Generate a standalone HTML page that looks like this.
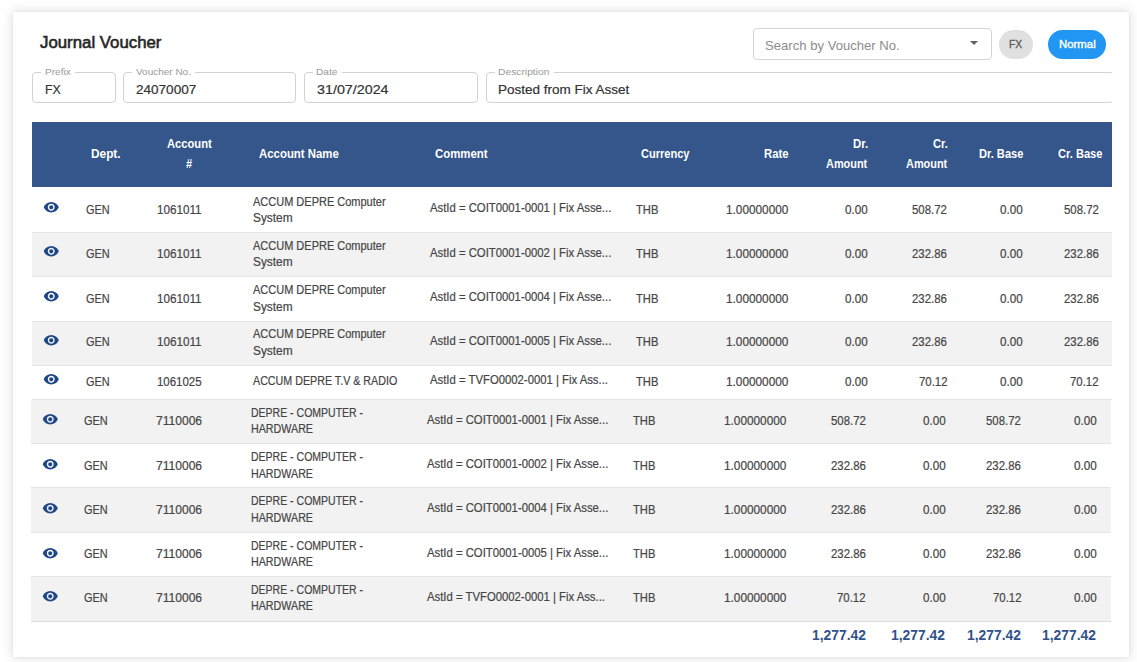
<!DOCTYPE html>
<html><head><meta charset="utf-8"><style>
html,body{margin:0;padding:0;background:#fff;width:1137px;height:662px;overflow:hidden;}
body{position:relative;font-family:"Liberation Sans",sans-serif;}
.b{position:absolute;}
.t{position:absolute;white-space:nowrap;transform-origin:0 0;}
svg{display:block;}
</style></head><body>
<div class="b" style="left:13.00px;top:12.00px;width:1116.00px;height:645.00px;background:#fff;box-shadow:0 0 11px 1px rgba(0,0,0,0.12),0 0 3px rgba(0,0,0,0.07);"></div>
<span class="t" style="left:39.75px;top:32.01px;font-size:17px;line-height:21px;color:#262626;transform:scaleX(0.9886);-webkit-text-stroke:0.6px #262626;">Journal Voucher</span>
<div class="b" style="left:753.00px;top:28.00px;width:239.00px;height:31.50px;border:1px solid #d6d6d6;border-radius:4px;box-sizing:border-box;"></div>
<span class="t" style="left:764.71px;top:37.69px;font-size:13px;line-height:16px;color:#8c8c8c;transform:scaleX(1.0080);">Search by Voucher No.</span>
<div class="b" style="left:969.5px;top:41px;width:0;height:0;border-left:4px solid transparent;border-right:4px solid transparent;border-top:4.5px solid #616161;"></div>
<div class="b" style="left:999.00px;top:30.00px;width:34.00px;height:28.50px;background:#e0e0e0;border-radius:15px;"></div>
<span class="t" style="left:1008.98px;top:38.83px;font-size:10px;line-height:12px;color:#5a5a5a;transform:scaleX(1.0298);-webkit-text-stroke:0.3px #5a5a5a;">FX</span>
<div class="b" style="left:1048.00px;top:30.00px;width:58.00px;height:28.50px;background:#2196f3;border-radius:15px;"></div>
<span class="t" style="left:1058.59px;top:38.83px;font-size:10px;line-height:12px;color:#fff;transform:scaleX(1.1382);-webkit-text-stroke:0.35px #fff;">Normal</span>
<div class="b" style="left:0;top:0;width:1112px;height:662px;overflow:hidden;">
<div class="b" style="left:32.00px;top:72.00px;width:84.00px;height:31.00px;border:1px solid #d2d2d2;border-radius:4px;box-sizing:border-box;"></div>
<div class="b" style="left:40.80px;top:71.00px;width:33.80px;height:3.00px;background:#fff;"></div>
<span class="t" style="left:44.50px;top:66.42px;font-size:9.75px;line-height:12px;color:#9a9a9a;transform:scaleX(1.0319);">Prefix</span>
<span class="t" style="left:45.01px;top:82.49px;font-size:13px;line-height:16px;color:#333;transform:scaleX(0.9493);-webkit-text-stroke:0.2px #333;">FX</span>
<div class="b" style="left:123.00px;top:72.00px;width:173.00px;height:31.00px;border:1px solid #d2d2d2;border-radius:4px;box-sizing:border-box;"></div>
<div class="b" style="left:131.80px;top:71.00px;width:63.00px;height:3.00px;background:#fff;"></div>
<span class="t" style="left:136.25px;top:66.42px;font-size:9.75px;line-height:12px;color:#9a9a9a;transform:scaleX(1.0237);">Voucher No.</span>
<span class="t" style="left:135.62px;top:82.49px;font-size:13px;line-height:16px;color:#333;transform:scaleX(1.0416);-webkit-text-stroke:0.2px #333;">24070007</span>
<div class="b" style="left:304.30px;top:72.00px;width:173.70px;height:31.00px;border:1px solid #d2d2d2;border-radius:4px;box-sizing:border-box;"></div>
<div class="b" style="left:312.50px;top:71.00px;width:29.10px;height:3.00px;background:#fff;"></div>
<span class="t" style="left:316.19px;top:66.42px;font-size:9.75px;line-height:12px;color:#9a9a9a;transform:scaleX(1.0359);">Date</span>
<span class="t" style="left:316.50px;top:82.49px;font-size:13px;line-height:16px;color:#333;transform:scaleX(1.0998);-webkit-text-stroke:0.2px #333;">31/07/2024</span>
<div class="b" style="left:486.30px;top:72.00px;width:627.70px;height:31.00px;border:1px solid #d2d2d2;border-radius:4px;box-sizing:border-box;"></div>
<div class="b" style="left:494.50px;top:71.00px;width:59.00px;height:3.00px;background:#fff;"></div>
<span class="t" style="left:498.18px;top:66.42px;font-size:9.75px;line-height:12px;color:#9a9a9a;transform:scaleX(1.0552);">Description</span>
<span class="t" style="left:497.92px;top:82.49px;font-size:13px;line-height:16px;color:#333;transform:scaleX(1.0373);-webkit-text-stroke:0.2px #333;">Posted from Fix Asset</span>
</div>
<div class="b" style="left:32.00px;top:122.00px;width:1080.00px;height:65.00px;background:#34568b;"></div>
<span class="t" style="left:91.23px;top:147.44px;font-size:12px;line-height:15px;color:#fff;font-weight:bold;transform:scaleX(0.9866);">Dept.</span>
<span class="t" style="left:167.32px;top:137.14px;font-size:12px;line-height:15px;color:#fff;font-weight:bold;transform:scaleX(0.9322);">Account</span>
<span class="t" style="left:186.33px;top:157.44px;font-size:12px;line-height:15px;color:#fff;font-weight:bold;transform:scaleX(0.9200);">#</span>
<span class="t" style="left:259.11px;top:147.24px;font-size:12px;line-height:15px;color:#fff;font-weight:bold;transform:scaleX(0.9503);">Account Name</span>
<span class="t" style="left:434.84px;top:147.24px;font-size:12px;line-height:15px;color:#fff;font-weight:bold;transform:scaleX(0.9503);">Comment</span>
<span class="t" style="left:640.66px;top:147.24px;font-size:12px;line-height:15px;color:#fff;font-weight:bold;transform:scaleX(0.9206);">Currency</span>
<span class="t" style="left:763.87px;top:147.24px;font-size:12px;line-height:15px;color:#fff;font-weight:bold;transform:scaleX(0.9420);">Rate</span>
<span class="t" style="left:853.16px;top:137.24px;font-size:12px;line-height:15px;color:#fff;font-weight:bold;transform:scaleX(0.9444);">Dr.</span>
<span class="t" style="left:826.43px;top:156.94px;font-size:12px;line-height:15px;color:#fff;font-weight:bold;transform:scaleX(0.9091);">Amount</span>
<span class="t" style="left:932.86px;top:137.24px;font-size:12px;line-height:15px;color:#fff;font-weight:bold;transform:scaleX(0.9252);">Cr.</span>
<span class="t" style="left:905.83px;top:156.94px;font-size:12px;line-height:15px;color:#fff;font-weight:bold;transform:scaleX(0.9091);">Amount</span>
<span class="t" style="left:978.68px;top:147.24px;font-size:12px;line-height:15px;color:#fff;font-weight:bold;transform:scaleX(0.9240);">Dr. Base</span>
<span class="t" style="left:1058.06px;top:147.24px;font-size:12px;line-height:15px;color:#fff;font-weight:bold;transform:scaleX(0.9245);">Cr. Base</span>
<div class="b" style="left:32.00px;top:187.00px;width:1080.00px;height:46.00px;background:#fff;border-bottom:1px solid #e4e4e4;box-sizing:border-box;"></div>
<div class="b" style="left:43.05px;top:199.05px;width:16px;height:16px;"><svg viewBox="0 0 24 24" width="16.5" height="16.5"><path fill="#1f4787" d="M12 4.5C7 4.5 2.73 7.61 1 12c1.73 4.39 6 7.5 11 7.5s9.27-3.11 11-7.5c-1.73-4.39-6-7.5-11-7.5zM12 17c-2.76 0-5-2.24-5-5s2.24-5 5-5 5 2.24 5 5-2.24 5-5 5zm0-8c-1.66 0-3 1.34-3 3s1.34 3 3 3 3-1.34 3-3-1.34-3-3-3z"/></svg></div>
<span class="t" style="left:85.75px;top:202.74px;font-size:12px;line-height:15px;color:#454545;-webkit-text-stroke:0.2px #454545;transform:scaleX(0.9132);">GEN</span>
<span class="t" style="left:157.22px;top:202.74px;font-size:12px;line-height:15px;color:#454545;-webkit-text-stroke:0.2px #454545;transform:scaleX(0.9730);">1061011</span>
<span class="t" style="left:253.20px;top:194.64px;font-size:12px;line-height:15px;color:#454545;-webkit-text-stroke:0.2px #454545;transform:scaleX(0.9160);">ACCUM DEPRE Computer</span>
<span class="t" style="left:252.67px;top:210.84px;font-size:12px;line-height:15px;color:#454545;-webkit-text-stroke:0.2px #454545;transform:scaleX(0.9897);">System</span>
<span class="t" style="left:430.00px;top:201.44px;font-size:12px;line-height:15px;color:#454545;-webkit-text-stroke:0.2px #454545;transform:scaleX(0.9432);">AstId = COIT0001-0001 | Fix Asse...</span>
<span class="t" style="left:635.58px;top:202.74px;font-size:12px;line-height:15px;color:#454545;-webkit-text-stroke:0.2px #454545;transform:scaleX(0.9326);">THB</span>
<span class="t" style="left:726.32px;top:202.74px;font-size:12px;line-height:15px;color:#454545;-webkit-text-stroke:0.2px #454545;transform:scaleX(0.9832);">1.00000000</span>
<span class="t" style="left:845.12px;top:202.74px;font-size:12px;line-height:15px;color:#454545;-webkit-text-stroke:0.2px #454545;transform:scaleX(0.9720);">0.00</span>
<span class="t" style="left:912.22px;top:202.74px;font-size:12px;line-height:15px;color:#454545;-webkit-text-stroke:0.2px #454545;transform:scaleX(0.9490);">508.72</span>
<span class="t" style="left:999.92px;top:202.74px;font-size:12px;line-height:15px;color:#454545;-webkit-text-stroke:0.2px #454545;transform:scaleX(0.9720);">0.00</span>
<span class="t" style="left:1063.72px;top:202.74px;font-size:12px;line-height:15px;color:#454545;-webkit-text-stroke:0.2px #454545;transform:scaleX(0.9490);">508.72</span>
<div class="b" style="left:32.00px;top:233.00px;width:1080.00px;height:44.00px;background:#f2f2f2;border-bottom:1px solid #e4e4e4;box-sizing:border-box;"></div>
<div class="b" style="left:43.05px;top:243.15px;width:16px;height:16px;"><svg viewBox="0 0 24 24" width="16.5" height="16.5"><path fill="#1f4787" d="M12 4.5C7 4.5 2.73 7.61 1 12c1.73 4.39 6 7.5 11 7.5s9.27-3.11 11-7.5c-1.73-4.39-6-7.5-11-7.5zM12 17c-2.76 0-5-2.24-5-5s2.24-5 5-5 5 2.24 5 5-2.24 5-5 5zm0-8c-1.66 0-3 1.34-3 3s1.34 3 3 3 3-1.34 3-3-1.34-3-3-3z"/></svg></div>
<span class="t" style="left:85.75px;top:246.84px;font-size:12px;line-height:15px;color:#454545;-webkit-text-stroke:0.2px #454545;transform:scaleX(0.9132);">GEN</span>
<span class="t" style="left:157.22px;top:246.84px;font-size:12px;line-height:15px;color:#454545;-webkit-text-stroke:0.2px #454545;transform:scaleX(0.9730);">1061011</span>
<span class="t" style="left:253.20px;top:238.74px;font-size:12px;line-height:15px;color:#454545;-webkit-text-stroke:0.2px #454545;transform:scaleX(0.9160);">ACCUM DEPRE Computer</span>
<span class="t" style="left:252.67px;top:254.94px;font-size:12px;line-height:15px;color:#454545;-webkit-text-stroke:0.2px #454545;transform:scaleX(0.9897);">System</span>
<span class="t" style="left:430.00px;top:245.54px;font-size:12px;line-height:15px;color:#454545;-webkit-text-stroke:0.2px #454545;transform:scaleX(0.9432);">AstId = COIT0001-0002 | Fix Asse...</span>
<span class="t" style="left:635.58px;top:246.84px;font-size:12px;line-height:15px;color:#454545;-webkit-text-stroke:0.2px #454545;transform:scaleX(0.9326);">THB</span>
<span class="t" style="left:726.32px;top:246.84px;font-size:12px;line-height:15px;color:#454545;-webkit-text-stroke:0.2px #454545;transform:scaleX(0.9832);">1.00000000</span>
<span class="t" style="left:845.12px;top:246.84px;font-size:12px;line-height:15px;color:#454545;-webkit-text-stroke:0.2px #454545;transform:scaleX(0.9720);">0.00</span>
<span class="t" style="left:912.11px;top:246.84px;font-size:12px;line-height:15px;color:#454545;-webkit-text-stroke:0.2px #454545;transform:scaleX(0.9490);">232.86</span>
<span class="t" style="left:999.92px;top:246.84px;font-size:12px;line-height:15px;color:#454545;-webkit-text-stroke:0.2px #454545;transform:scaleX(0.9720);">0.00</span>
<span class="t" style="left:1063.61px;top:246.84px;font-size:12px;line-height:15px;color:#454545;-webkit-text-stroke:0.2px #454545;transform:scaleX(0.9490);">232.86</span>
<div class="b" style="left:32.00px;top:277.00px;width:1080.00px;height:45.00px;background:#fff;border-bottom:1px solid #e4e4e4;box-sizing:border-box;"></div>
<div class="b" style="left:43.05px;top:287.85px;width:16px;height:16px;"><svg viewBox="0 0 24 24" width="16.5" height="16.5"><path fill="#1f4787" d="M12 4.5C7 4.5 2.73 7.61 1 12c1.73 4.39 6 7.5 11 7.5s9.27-3.11 11-7.5c-1.73-4.39-6-7.5-11-7.5zM12 17c-2.76 0-5-2.24-5-5s2.24-5 5-5 5 2.24 5 5-2.24 5-5 5zm0-8c-1.66 0-3 1.34-3 3s1.34 3 3 3 3-1.34 3-3-1.34-3-3-3z"/></svg></div>
<span class="t" style="left:85.75px;top:291.54px;font-size:12px;line-height:15px;color:#454545;-webkit-text-stroke:0.2px #454545;transform:scaleX(0.9132);">GEN</span>
<span class="t" style="left:157.22px;top:291.54px;font-size:12px;line-height:15px;color:#454545;-webkit-text-stroke:0.2px #454545;transform:scaleX(0.9730);">1061011</span>
<span class="t" style="left:253.20px;top:283.44px;font-size:12px;line-height:15px;color:#454545;-webkit-text-stroke:0.2px #454545;transform:scaleX(0.9160);">ACCUM DEPRE Computer</span>
<span class="t" style="left:252.67px;top:299.64px;font-size:12px;line-height:15px;color:#454545;-webkit-text-stroke:0.2px #454545;transform:scaleX(0.9897);">System</span>
<span class="t" style="left:430.00px;top:290.24px;font-size:12px;line-height:15px;color:#454545;-webkit-text-stroke:0.2px #454545;transform:scaleX(0.9432);">AstId = COIT0001-0004 | Fix Asse...</span>
<span class="t" style="left:635.58px;top:291.54px;font-size:12px;line-height:15px;color:#454545;-webkit-text-stroke:0.2px #454545;transform:scaleX(0.9326);">THB</span>
<span class="t" style="left:726.32px;top:291.54px;font-size:12px;line-height:15px;color:#454545;-webkit-text-stroke:0.2px #454545;transform:scaleX(0.9832);">1.00000000</span>
<span class="t" style="left:845.12px;top:291.54px;font-size:12px;line-height:15px;color:#454545;-webkit-text-stroke:0.2px #454545;transform:scaleX(0.9720);">0.00</span>
<span class="t" style="left:912.11px;top:291.54px;font-size:12px;line-height:15px;color:#454545;-webkit-text-stroke:0.2px #454545;transform:scaleX(0.9490);">232.86</span>
<span class="t" style="left:999.92px;top:291.54px;font-size:12px;line-height:15px;color:#454545;-webkit-text-stroke:0.2px #454545;transform:scaleX(0.9720);">0.00</span>
<span class="t" style="left:1063.61px;top:291.54px;font-size:12px;line-height:15px;color:#454545;-webkit-text-stroke:0.2px #454545;transform:scaleX(0.9490);">232.86</span>
<div class="b" style="left:32.00px;top:322.00px;width:1080.00px;height:44.00px;background:#f2f2f2;border-bottom:1px solid #e4e4e4;box-sizing:border-box;"></div>
<div class="b" style="left:43.05px;top:331.75px;width:16px;height:16px;"><svg viewBox="0 0 24 24" width="16.5" height="16.5"><path fill="#1f4787" d="M12 4.5C7 4.5 2.73 7.61 1 12c1.73 4.39 6 7.5 11 7.5s9.27-3.11 11-7.5c-1.73-4.39-6-7.5-11-7.5zM12 17c-2.76 0-5-2.24-5-5s2.24-5 5-5 5 2.24 5 5-2.24 5-5 5zm0-8c-1.66 0-3 1.34-3 3s1.34 3 3 3 3-1.34 3-3-1.34-3-3-3z"/></svg></div>
<span class="t" style="left:85.75px;top:335.44px;font-size:12px;line-height:15px;color:#454545;-webkit-text-stroke:0.2px #454545;transform:scaleX(0.9132);">GEN</span>
<span class="t" style="left:157.22px;top:335.44px;font-size:12px;line-height:15px;color:#454545;-webkit-text-stroke:0.2px #454545;transform:scaleX(0.9730);">1061011</span>
<span class="t" style="left:253.20px;top:327.34px;font-size:12px;line-height:15px;color:#454545;-webkit-text-stroke:0.2px #454545;transform:scaleX(0.9160);">ACCUM DEPRE Computer</span>
<span class="t" style="left:252.67px;top:343.54px;font-size:12px;line-height:15px;color:#454545;-webkit-text-stroke:0.2px #454545;transform:scaleX(0.9897);">System</span>
<span class="t" style="left:430.00px;top:334.14px;font-size:12px;line-height:15px;color:#454545;-webkit-text-stroke:0.2px #454545;transform:scaleX(0.9432);">AstId = COIT0001-0005 | Fix Asse...</span>
<span class="t" style="left:635.58px;top:335.44px;font-size:12px;line-height:15px;color:#454545;-webkit-text-stroke:0.2px #454545;transform:scaleX(0.9326);">THB</span>
<span class="t" style="left:726.32px;top:335.44px;font-size:12px;line-height:15px;color:#454545;-webkit-text-stroke:0.2px #454545;transform:scaleX(0.9832);">1.00000000</span>
<span class="t" style="left:845.12px;top:335.44px;font-size:12px;line-height:15px;color:#454545;-webkit-text-stroke:0.2px #454545;transform:scaleX(0.9720);">0.00</span>
<span class="t" style="left:912.11px;top:335.44px;font-size:12px;line-height:15px;color:#454545;-webkit-text-stroke:0.2px #454545;transform:scaleX(0.9490);">232.86</span>
<span class="t" style="left:999.92px;top:335.44px;font-size:12px;line-height:15px;color:#454545;-webkit-text-stroke:0.2px #454545;transform:scaleX(0.9720);">0.00</span>
<span class="t" style="left:1063.61px;top:335.44px;font-size:12px;line-height:15px;color:#454545;-webkit-text-stroke:0.2px #454545;transform:scaleX(0.9490);">232.86</span>
<div class="b" style="left:32.00px;top:366.00px;width:1080.00px;height:34.00px;background:#fff;border-bottom:1px solid #e4e4e4;box-sizing:border-box;"></div>
<div class="b" style="left:43.05px;top:370.95px;width:16px;height:16px;"><svg viewBox="0 0 24 24" width="16.5" height="16.5"><path fill="#1f4787" d="M12 4.5C7 4.5 2.73 7.61 1 12c1.73 4.39 6 7.5 11 7.5s9.27-3.11 11-7.5c-1.73-4.39-6-7.5-11-7.5zM12 17c-2.76 0-5-2.24-5-5s2.24-5 5-5 5 2.24 5 5-2.24 5-5 5zm0-8c-1.66 0-3 1.34-3 3s1.34 3 3 3 3-1.34 3-3-1.34-3-3-3z"/></svg></div>
<span class="t" style="left:85.75px;top:374.64px;font-size:12px;line-height:15px;color:#454545;-webkit-text-stroke:0.2px #454545;transform:scaleX(0.9132);">GEN</span>
<span class="t" style="left:157.24px;top:374.64px;font-size:12px;line-height:15px;color:#454545;-webkit-text-stroke:0.2px #454545;transform:scaleX(0.9536);">1061025</span>
<span class="t" style="left:253.20px;top:374.34px;font-size:12px;line-height:15px;color:#454545;-webkit-text-stroke:0.2px #454545;transform:scaleX(0.8913);">ACCUM DEPRE T.V &amp; RADIO</span>
<span class="t" style="left:430.00px;top:373.34px;font-size:12px;line-height:15px;color:#454545;-webkit-text-stroke:0.2px #454545;transform:scaleX(0.9434);">AstId = TVFO0002-0001 | Fix Ass...</span>
<span class="t" style="left:635.58px;top:374.64px;font-size:12px;line-height:15px;color:#454545;-webkit-text-stroke:0.2px #454545;transform:scaleX(0.9326);">THB</span>
<span class="t" style="left:726.32px;top:374.64px;font-size:12px;line-height:15px;color:#454545;-webkit-text-stroke:0.2px #454545;transform:scaleX(0.9832);">1.00000000</span>
<span class="t" style="left:845.12px;top:374.64px;font-size:12px;line-height:15px;color:#454545;-webkit-text-stroke:0.2px #454545;transform:scaleX(0.9720);">0.00</span>
<span class="t" style="left:918.60px;top:374.64px;font-size:12px;line-height:15px;color:#454545;-webkit-text-stroke:0.2px #454545;transform:scaleX(0.9490);">70.12</span>
<span class="t" style="left:999.92px;top:374.64px;font-size:12px;line-height:15px;color:#454545;-webkit-text-stroke:0.2px #454545;transform:scaleX(0.9720);">0.00</span>
<span class="t" style="left:1070.10px;top:374.64px;font-size:12px;line-height:15px;color:#454545;-webkit-text-stroke:0.2px #454545;transform:scaleX(0.9490);">70.12</span>
<div class="b" style="left:31.00px;top:400.00px;width:1080.00px;height:44.00px;background:#f2f2f2;border-bottom:1px solid #e4e4e4;box-sizing:border-box;"></div>
<div class="b" style="left:41.85px;top:411.15px;width:16px;height:16px;"><svg viewBox="0 0 24 24" width="16.5" height="16.5"><path fill="#1f4787" d="M12 4.5C7 4.5 2.73 7.61 1 12c1.73 4.39 6 7.5 11 7.5s9.27-3.11 11-7.5c-1.73-4.39-6-7.5-11-7.5zM12 17c-2.76 0-5-2.24-5-5s2.24-5 5-5 5 2.24 5 5-2.24 5-5 5zm0-8c-1.66 0-3 1.34-3 3s1.34 3 3 3 3-1.34 3-3-1.34-3-3-3z"/></svg></div>
<span class="t" style="left:84.25px;top:414.14px;font-size:12px;line-height:15px;color:#454545;-webkit-text-stroke:0.2px #454545;transform:scaleX(0.9132);">GEN</span>
<span class="t" style="left:155.60px;top:414.14px;font-size:12px;line-height:15px;color:#454545;-webkit-text-stroke:0.2px #454545;transform:scaleX(1.0054);">7110006</span>
<span class="t" style="left:251.46px;top:405.54px;font-size:12px;line-height:15px;color:#454545;-webkit-text-stroke:0.2px #454545;transform:scaleX(0.8756);">DEPRE - COMPUTER -</span>
<span class="t" style="left:251.44px;top:422.04px;font-size:12px;line-height:15px;color:#454545;-webkit-text-stroke:0.2px #454545;transform:scaleX(0.8913);">HARDWARE</span>
<span class="t" style="left:427.40px;top:412.54px;font-size:12px;line-height:15px;color:#454545;-webkit-text-stroke:0.2px #454545;transform:scaleX(0.9432);">AstId = COIT0001-0001 | Fix Asse...</span>
<span class="t" style="left:633.38px;top:414.14px;font-size:12px;line-height:15px;color:#454545;-webkit-text-stroke:0.2px #454545;transform:scaleX(0.9326);">THB</span>
<span class="t" style="left:724.12px;top:414.14px;font-size:12px;line-height:15px;color:#454545;-webkit-text-stroke:0.2px #454545;transform:scaleX(0.9832);">1.00000000</span>
<span class="t" style="left:830.92px;top:414.14px;font-size:12px;line-height:15px;color:#454545;-webkit-text-stroke:0.2px #454545;transform:scaleX(0.9490);">508.72</span>
<span class="t" style="left:922.52px;top:414.14px;font-size:12px;line-height:15px;color:#454545;-webkit-text-stroke:0.2px #454545;transform:scaleX(0.9720);">0.00</span>
<span class="t" style="left:986.32px;top:414.14px;font-size:12px;line-height:15px;color:#454545;-webkit-text-stroke:0.2px #454545;transform:scaleX(0.9490);">508.72</span>
<span class="t" style="left:1073.52px;top:414.14px;font-size:12px;line-height:15px;color:#454545;-webkit-text-stroke:0.2px #454545;transform:scaleX(0.9720);">0.00</span>
<div class="b" style="left:31.00px;top:444.00px;width:1080.00px;height:44.00px;background:#fff;border-bottom:1px solid #e4e4e4;box-sizing:border-box;"></div>
<div class="b" style="left:41.85px;top:455.95px;width:16px;height:16px;"><svg viewBox="0 0 24 24" width="16.5" height="16.5"><path fill="#1f4787" d="M12 4.5C7 4.5 2.73 7.61 1 12c1.73 4.39 6 7.5 11 7.5s9.27-3.11 11-7.5c-1.73-4.39-6-7.5-11-7.5zM12 17c-2.76 0-5-2.24-5-5s2.24-5 5-5 5 2.24 5 5-2.24 5-5 5zm0-8c-1.66 0-3 1.34-3 3s1.34 3 3 3 3-1.34 3-3-1.34-3-3-3z"/></svg></div>
<span class="t" style="left:84.25px;top:458.94px;font-size:12px;line-height:15px;color:#454545;-webkit-text-stroke:0.2px #454545;transform:scaleX(0.9132);">GEN</span>
<span class="t" style="left:155.60px;top:458.94px;font-size:12px;line-height:15px;color:#454545;-webkit-text-stroke:0.2px #454545;transform:scaleX(1.0054);">7110006</span>
<span class="t" style="left:251.46px;top:450.34px;font-size:12px;line-height:15px;color:#454545;-webkit-text-stroke:0.2px #454545;transform:scaleX(0.8756);">DEPRE - COMPUTER -</span>
<span class="t" style="left:251.44px;top:466.84px;font-size:12px;line-height:15px;color:#454545;-webkit-text-stroke:0.2px #454545;transform:scaleX(0.8913);">HARDWARE</span>
<span class="t" style="left:427.40px;top:457.34px;font-size:12px;line-height:15px;color:#454545;-webkit-text-stroke:0.2px #454545;transform:scaleX(0.9432);">AstId = COIT0001-0002 | Fix Asse...</span>
<span class="t" style="left:633.38px;top:458.94px;font-size:12px;line-height:15px;color:#454545;-webkit-text-stroke:0.2px #454545;transform:scaleX(0.9326);">THB</span>
<span class="t" style="left:724.12px;top:458.94px;font-size:12px;line-height:15px;color:#454545;-webkit-text-stroke:0.2px #454545;transform:scaleX(0.9832);">1.00000000</span>
<span class="t" style="left:830.81px;top:458.94px;font-size:12px;line-height:15px;color:#454545;-webkit-text-stroke:0.2px #454545;transform:scaleX(0.9490);">232.86</span>
<span class="t" style="left:922.52px;top:458.94px;font-size:12px;line-height:15px;color:#454545;-webkit-text-stroke:0.2px #454545;transform:scaleX(0.9720);">0.00</span>
<span class="t" style="left:986.21px;top:458.94px;font-size:12px;line-height:15px;color:#454545;-webkit-text-stroke:0.2px #454545;transform:scaleX(0.9490);">232.86</span>
<span class="t" style="left:1073.52px;top:458.94px;font-size:12px;line-height:15px;color:#454545;-webkit-text-stroke:0.2px #454545;transform:scaleX(0.9720);">0.00</span>
<div class="b" style="left:31.00px;top:488.00px;width:1080.00px;height:45.00px;background:#f2f2f2;border-bottom:1px solid #e4e4e4;box-sizing:border-box;"></div>
<div class="b" style="left:41.85px;top:499.65px;width:16px;height:16px;"><svg viewBox="0 0 24 24" width="16.5" height="16.5"><path fill="#1f4787" d="M12 4.5C7 4.5 2.73 7.61 1 12c1.73 4.39 6 7.5 11 7.5s9.27-3.11 11-7.5c-1.73-4.39-6-7.5-11-7.5zM12 17c-2.76 0-5-2.24-5-5s2.24-5 5-5 5 2.24 5 5-2.24 5-5 5zm0-8c-1.66 0-3 1.34-3 3s1.34 3 3 3 3-1.34 3-3-1.34-3-3-3z"/></svg></div>
<span class="t" style="left:84.25px;top:502.64px;font-size:12px;line-height:15px;color:#454545;-webkit-text-stroke:0.2px #454545;transform:scaleX(0.9132);">GEN</span>
<span class="t" style="left:155.60px;top:502.64px;font-size:12px;line-height:15px;color:#454545;-webkit-text-stroke:0.2px #454545;transform:scaleX(1.0054);">7110006</span>
<span class="t" style="left:251.46px;top:494.04px;font-size:12px;line-height:15px;color:#454545;-webkit-text-stroke:0.2px #454545;transform:scaleX(0.8756);">DEPRE - COMPUTER -</span>
<span class="t" style="left:251.44px;top:510.54px;font-size:12px;line-height:15px;color:#454545;-webkit-text-stroke:0.2px #454545;transform:scaleX(0.8913);">HARDWARE</span>
<span class="t" style="left:427.40px;top:501.04px;font-size:12px;line-height:15px;color:#454545;-webkit-text-stroke:0.2px #454545;transform:scaleX(0.9432);">AstId = COIT0001-0004 | Fix Asse...</span>
<span class="t" style="left:633.38px;top:502.64px;font-size:12px;line-height:15px;color:#454545;-webkit-text-stroke:0.2px #454545;transform:scaleX(0.9326);">THB</span>
<span class="t" style="left:724.12px;top:502.64px;font-size:12px;line-height:15px;color:#454545;-webkit-text-stroke:0.2px #454545;transform:scaleX(0.9832);">1.00000000</span>
<span class="t" style="left:830.81px;top:502.64px;font-size:12px;line-height:15px;color:#454545;-webkit-text-stroke:0.2px #454545;transform:scaleX(0.9490);">232.86</span>
<span class="t" style="left:922.52px;top:502.64px;font-size:12px;line-height:15px;color:#454545;-webkit-text-stroke:0.2px #454545;transform:scaleX(0.9720);">0.00</span>
<span class="t" style="left:986.21px;top:502.64px;font-size:12px;line-height:15px;color:#454545;-webkit-text-stroke:0.2px #454545;transform:scaleX(0.9490);">232.86</span>
<span class="t" style="left:1073.52px;top:502.64px;font-size:12px;line-height:15px;color:#454545;-webkit-text-stroke:0.2px #454545;transform:scaleX(0.9720);">0.00</span>
<div class="b" style="left:31.00px;top:533.00px;width:1080.00px;height:44.00px;background:#fff;border-bottom:1px solid #e4e4e4;box-sizing:border-box;"></div>
<div class="b" style="left:41.85px;top:544.50px;width:16px;height:16px;"><svg viewBox="0 0 24 24" width="16.5" height="16.5"><path fill="#1f4787" d="M12 4.5C7 4.5 2.73 7.61 1 12c1.73 4.39 6 7.5 11 7.5s9.27-3.11 11-7.5c-1.73-4.39-6-7.5-11-7.5zM12 17c-2.76 0-5-2.24-5-5s2.24-5 5-5 5 2.24 5 5-2.24 5-5 5zm0-8c-1.66 0-3 1.34-3 3s1.34 3 3 3 3-1.34 3-3-1.34-3-3-3z"/></svg></div>
<span class="t" style="left:84.25px;top:547.49px;font-size:12px;line-height:15px;color:#454545;-webkit-text-stroke:0.2px #454545;transform:scaleX(0.9132);">GEN</span>
<span class="t" style="left:155.60px;top:547.49px;font-size:12px;line-height:15px;color:#454545;-webkit-text-stroke:0.2px #454545;transform:scaleX(1.0054);">7110006</span>
<span class="t" style="left:251.46px;top:538.89px;font-size:12px;line-height:15px;color:#454545;-webkit-text-stroke:0.2px #454545;transform:scaleX(0.8756);">DEPRE - COMPUTER -</span>
<span class="t" style="left:251.44px;top:555.39px;font-size:12px;line-height:15px;color:#454545;-webkit-text-stroke:0.2px #454545;transform:scaleX(0.8913);">HARDWARE</span>
<span class="t" style="left:427.40px;top:545.89px;font-size:12px;line-height:15px;color:#454545;-webkit-text-stroke:0.2px #454545;transform:scaleX(0.9432);">AstId = COIT0001-0005 | Fix Asse...</span>
<span class="t" style="left:633.38px;top:547.49px;font-size:12px;line-height:15px;color:#454545;-webkit-text-stroke:0.2px #454545;transform:scaleX(0.9326);">THB</span>
<span class="t" style="left:724.12px;top:547.49px;font-size:12px;line-height:15px;color:#454545;-webkit-text-stroke:0.2px #454545;transform:scaleX(0.9832);">1.00000000</span>
<span class="t" style="left:830.81px;top:547.49px;font-size:12px;line-height:15px;color:#454545;-webkit-text-stroke:0.2px #454545;transform:scaleX(0.9490);">232.86</span>
<span class="t" style="left:922.52px;top:547.49px;font-size:12px;line-height:15px;color:#454545;-webkit-text-stroke:0.2px #454545;transform:scaleX(0.9720);">0.00</span>
<span class="t" style="left:986.21px;top:547.49px;font-size:12px;line-height:15px;color:#454545;-webkit-text-stroke:0.2px #454545;transform:scaleX(0.9490);">232.86</span>
<span class="t" style="left:1073.52px;top:547.49px;font-size:12px;line-height:15px;color:#454545;-webkit-text-stroke:0.2px #454545;transform:scaleX(0.9720);">0.00</span>
<div class="b" style="left:31.00px;top:577.00px;width:1080.00px;height:45.00px;background:#f2f2f2;border-bottom:1px solid #dcdcdc;box-sizing:border-box;"></div>
<div class="b" style="left:41.85px;top:588.35px;width:16px;height:16px;"><svg viewBox="0 0 24 24" width="16.5" height="16.5"><path fill="#1f4787" d="M12 4.5C7 4.5 2.73 7.61 1 12c1.73 4.39 6 7.5 11 7.5s9.27-3.11 11-7.5c-1.73-4.39-6-7.5-11-7.5zM12 17c-2.76 0-5-2.24-5-5s2.24-5 5-5 5 2.24 5 5-2.24 5-5 5zm0-8c-1.66 0-3 1.34-3 3s1.34 3 3 3 3-1.34 3-3-1.34-3-3-3z"/></svg></div>
<span class="t" style="left:84.25px;top:591.34px;font-size:12px;line-height:15px;color:#454545;-webkit-text-stroke:0.2px #454545;transform:scaleX(0.9132);">GEN</span>
<span class="t" style="left:155.60px;top:591.34px;font-size:12px;line-height:15px;color:#454545;-webkit-text-stroke:0.2px #454545;transform:scaleX(1.0054);">7110006</span>
<span class="t" style="left:251.46px;top:582.74px;font-size:12px;line-height:15px;color:#454545;-webkit-text-stroke:0.2px #454545;transform:scaleX(0.8756);">DEPRE - COMPUTER -</span>
<span class="t" style="left:251.44px;top:599.24px;font-size:12px;line-height:15px;color:#454545;-webkit-text-stroke:0.2px #454545;transform:scaleX(0.8913);">HARDWARE</span>
<span class="t" style="left:427.40px;top:589.74px;font-size:12px;line-height:15px;color:#454545;-webkit-text-stroke:0.2px #454545;transform:scaleX(0.9434);">AstId = TVFO0002-0001 | Fix Ass...</span>
<span class="t" style="left:633.38px;top:591.34px;font-size:12px;line-height:15px;color:#454545;-webkit-text-stroke:0.2px #454545;transform:scaleX(0.9326);">THB</span>
<span class="t" style="left:724.12px;top:591.34px;font-size:12px;line-height:15px;color:#454545;-webkit-text-stroke:0.2px #454545;transform:scaleX(0.9832);">1.00000000</span>
<span class="t" style="left:837.30px;top:591.34px;font-size:12px;line-height:15px;color:#454545;-webkit-text-stroke:0.2px #454545;transform:scaleX(0.9490);">70.12</span>
<span class="t" style="left:922.52px;top:591.34px;font-size:12px;line-height:15px;color:#454545;-webkit-text-stroke:0.2px #454545;transform:scaleX(0.9720);">0.00</span>
<span class="t" style="left:992.70px;top:591.34px;font-size:12px;line-height:15px;color:#454545;-webkit-text-stroke:0.2px #454545;transform:scaleX(0.9490);">70.12</span>
<span class="t" style="left:1073.52px;top:591.34px;font-size:12px;line-height:15px;color:#454545;-webkit-text-stroke:0.2px #454545;transform:scaleX(0.9720);">0.00</span>
<span class="t" style="left:811.97px;top:626.07px;font-size:14.5px;line-height:18px;color:#30518a;font-weight:bold;transform:scaleX(0.9553);">1,277.42</span>
<span class="t" style="left:890.77px;top:626.07px;font-size:14.5px;line-height:18px;color:#30518a;font-weight:bold;transform:scaleX(0.9553);">1,277.42</span>
<span class="t" style="left:966.77px;top:626.07px;font-size:14.5px;line-height:18px;color:#30518a;font-weight:bold;transform:scaleX(0.9553);">1,277.42</span>
<span class="t" style="left:1042.17px;top:626.07px;font-size:14.5px;line-height:18px;color:#30518a;font-weight:bold;transform:scaleX(0.9553);">1,277.42</span>
</body></html>
